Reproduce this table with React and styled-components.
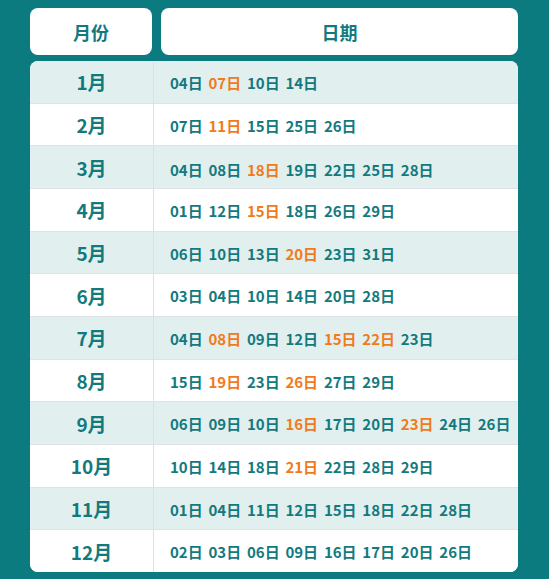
import React from 'react';
import styled, { createGlobalStyle } from 'styled-components';

const GlobalStyle = createGlobalStyle`
  html, body {
    margin: 0;
    padding: 0;
    background: #0b7b80;
  }
  body {
    font-family: "Noto Sans CJK SC", "Noto Sans", sans-serif;
  }
`;

const Page = styled.div`
  width: 549px;
  height: 579px;
  box-sizing: border-box;
  padding: 8px 31px 0 30px;
  background: #0b7b80;
`;

const HeaderRow = styled.div`
  display: grid;
  grid-template-columns: 122px 1fr;
  gap: 9px;
  margin-bottom: 6px;
`;

const HeaderCell = styled.div`
  height: 47px;
  background: #ffffff;
  border-radius: 8px;
  display: flex;
  align-items: center;
  justify-content: center;
  color: #127a7e;
  font-size: 18px;
  font-weight: 700;
`;

const Table = styled.div`
  height: 511px;
  background: #ffffff;
  border-radius: 8px;
  overflow: hidden;
  display: flex;
  flex-direction: column;
`;

const Row = styled.div`
  flex: 1;
  display: grid;
  grid-template-columns: 124px 1fr;
  background: ${({ shaded }) => (shaded ? '#e2efef' : '#ffffff')};
  border-bottom: 1px solid #dde3e6;

  &:last-child {
    border-bottom: none;
  }
`;

const MonthCell = styled.div`
  display: flex;
  align-items: center;
  justify-content: center;
  border-right: 1px solid #d3e4e5;
  color: #127a7e;
  font-size: 19px;
  font-weight: 700;
`;

const DateCell = styled.div`
  display: flex;
  align-items: center;
  gap: 5.75px;
  padding: ${({ low }) => (low ? '5px' : '1px')} 0 0 16px;
  font-size: 15px;
  font-weight: 700;
`;

const Day = styled.span`
  color: ${({ hot }) => (hot ? '#f17a1b' : '#127a7e')};
  white-space: nowrap;
`;

const months = [
  { m: '1月', d: ['04', '*07', '10', '14'] },
  { m: '2月', d: ['07', '*11', '15', '25', '26'] },
  { m: '3月', d: ['04', '08', '*18', '19', '22', '25', '28'], low: true },
  { m: '4月', d: ['01', '12', '*15', '18', '26', '29'] },
  { m: '5月', d: ['06', '10', '13', '*20', '23', '31'] },
  { m: '6月', d: ['03', '04', '10', '14', '20', '28'] },
  { m: '7月', d: ['04', '*08', '09', '12', '*15', '*22', '23'] },
  { m: '8月', d: ['15', '*19', '23', '*26', '27', '29'] },
  { m: '9月', d: ['06', '09', '10', '*16', '17', '20', '*23', '24', '26'] },
  { m: '10月', d: ['10', '14', '18', '*21', '22', '28', '29'] },
  { m: '11月', d: ['01', '04', '11', '12', '15', '18', '22', '28'] },
  { m: '12月', d: ['02', '03', '06', '09', '16', '17', '20', '26'] },
];

export default function App() {
  return (
    <>
      <GlobalStyle />
      <Page>
        <HeaderRow>
          <HeaderCell>月份</HeaderCell>
          <HeaderCell>日期</HeaderCell>
        </HeaderRow>
        <Table>
          {months.map((row, i) => (
            <Row key={row.m} shaded={i % 2 === 0}>
              <MonthCell>{row.m}</MonthCell>
              <DateCell low={row.low}>
                {row.d.map((day) => {
                  const hot = day.startsWith('*');
                  return (
                    <Day key={day} hot={hot}>
                      {hot ? day.slice(1) : day}日
                    </Day>
                  );
                })}
              </DateCell>
            </Row>
          ))}
        </Table>
      </Page>
    </>
  );
}
